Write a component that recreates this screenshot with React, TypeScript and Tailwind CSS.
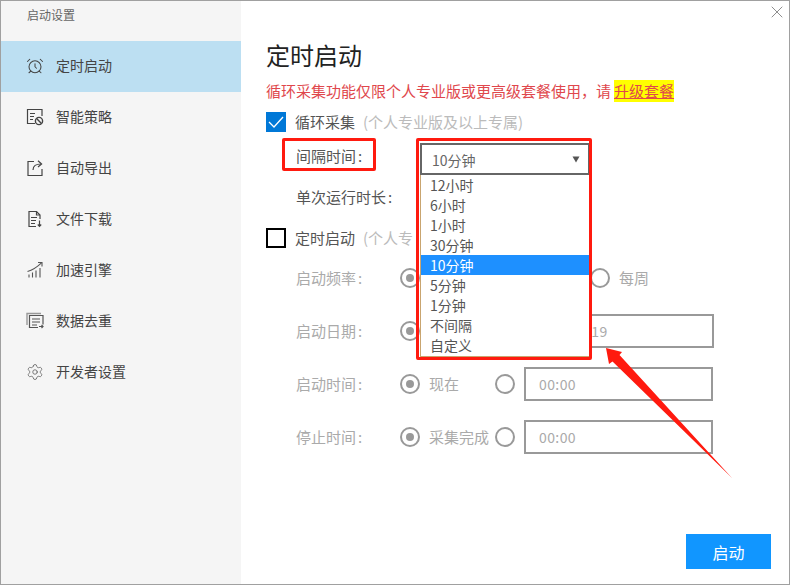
import React from 'react';
import { AlarmClock, Settings, X } from 'lucide-react';

const FONT = '[font-family:"Noto_Sans_CJK_SC","Noto_Sans",sans-serif]';

const StrategyIcon = () => (
  <svg width="18" height="18" viewBox="0 0 18 18" fill="none" stroke="#444" strokeWidth="1.2">
    <path d="M9 15.5H1.5V1.5H16V8" />
    <path d="M4 5.5h5M4 8.5h4M4 11.5h3" />
    <circle cx="13" cy="13" r="3.6" strokeWidth="1.4" />
    <path d="M10.6 10.6l4.8 4.8" strokeWidth="1.4" />
  </svg>
);

const ExportIcon = () => (
  <svg width="18" height="18" viewBox="0 0 18 18" fill="none" stroke="#444" strokeWidth="1.2">
    <path d="M8 2.5H2v14h14V10" />
    <path d="M7 11c0-4 3-6 8-6" />
    <path d="M12 1.8L15.6 5 12 8" />
  </svg>
);

const DownloadDocIcon = () => (
  <svg width="18" height="18" viewBox="0 0 18 18" fill="none" stroke="#444" strokeWidth="1.2">
    <path d="M10 16.5H3V1.5h7.5L14 5v4" />
    <path d="M10.5 1.5V5H14" />
    <path d="M5 7.5h6M5 10.5h5M5 13.5h4" />
    <path d="M13.5 10.5v5.5M11.8 14.5l1.7 1.8 1.7-1.8" />
  </svg>
);

const SpeedIcon = () => (
  <svg width="18" height="18" viewBox="0 0 18 18" fill="none" stroke="#555" strokeWidth="1.1">
    <path d="M1.5 10.5C5 9.5 10 7 15.5 1.8" />
    <path d="M12 1.5h4v4" />
    <path d="M3 16.5v-3M6.5 16.5v-5M10 16.5v-7M14 16.5V7" />
  </svg>
);

const DedupeIcon = () => (
  <svg width="18" height="18" viewBox="0 0 18 18" fill="none" stroke="#555" strokeWidth="1.2">
    <path d="M1 13V1.5h14" stroke="#999" strokeWidth="1.4" />
    <path d="M12 15.5H3.5v-12H17v9" />
    <path d="M6 7h8M6 10h8M6 13h5" />
    <path d="M13 14.5h4M15.5 13l1.5 1.5-1.5 1.5" />
  </svg>
);

const menu = [
  { label: '定时启动', icon: <AlarmClock size={18} strokeWidth={1.4} color="#444" />, active: true },
  { label: '智能策略', icon: <StrategyIcon /> },
  { label: '自动导出', icon: <ExportIcon /> },
  { label: '文件下载', icon: <DownloadDocIcon /> },
  { label: '加速引擎', icon: <SpeedIcon /> },
  { label: '数据去重', icon: <DedupeIcon /> },
  { label: '开发者设置', icon: <Settings size={18} strokeWidth={1} color="#555" /> },
];

const options = ['12小时', '6小时', '1小时', '30分钟', '10分钟', '5分钟', '1分钟', '不间隔', '自定义'];

const Radio = ({ on }: { on?: boolean }) => (
  <span className="flex h-5 w-5 shrink-0 items-center justify-center rounded-full border-2 border-[#999]">
    {on && <span className="h-2 w-2 rounded-full bg-[#999]" />}
  </span>
);

const TimeInput = ({ value }: { value: string }) => (
  <div className="flex h-[34px] w-[189px] items-center border-2 border-[#999] pl-[13px] text-[14px] tracking-[0.4px] text-[#aaa]">
    {value}
  </div>
);

const Label = ({ text, className }: { text: string; className?: string }) => (
  <span className={`shrink-0 ${className ?? ''}`}>
    {text}
    <span className="ml-[2px]">:</span>
  </span>
);

const App: React.FC = () => {
  return (
    <div className={`relative flex h-[585px] w-[790px] overflow-hidden border border-[#a0a0a0] bg-white ${FONT}`}>
      {/* Sidebar */}
      <aside className="w-[240px] shrink-0 bg-[#f5f5f5]">
        <div className="h-[40px] pl-[26px] pt-[5px] text-[12px] leading-[18px] text-[#666]">启动设置</div>
        {menu.map(item => (
          <div
            key={item.label}
            className={`flex h-[51px] items-center pb-[2px] pl-[25px] text-[14px] text-[#444] ${item.active ? 'bg-[#bcdff2]' : ''}`}
          >
            <span className="flex w-[30px] shrink-0">{item.icon}</span>
            {item.label}
          </div>
        ))}
      </aside>

      {/* Main */}
      <main className="flex min-w-0 flex-1 flex-col pl-[25px] pt-[38px]">
        <h1 className="text-[24px] leading-[32px] font-normal text-[#222]">定时启动</h1>
        <p className="mt-[10px] flex h-5 items-center text-[15px] whitespace-nowrap text-[#e0474c]">
          循环采集功能仅限个人专业版或更高级套餐使用，请
          <span className="ml-[3px] bg-[#ffff00] text-[#e0474c] underline">升级套餐</span>
        </p>

        <div className="mt-[11px] flex h-5 items-center text-[15px] whitespace-nowrap">
          <span className="flex h-5 w-5 items-center justify-center bg-[#0078d7]">
            <svg width="16" height="12" viewBox="0 0 16 12" fill="none" stroke="#fff" strokeWidth="1.3">
              <path d="M1 6l5 5L15 1" />
            </svg>
          </span>
          <span className="ml-[9px] text-[#555]">循环采集</span>
          <span className="ml-2 text-[#bbb]">(个人专业版及以上专属)</span>
        </div>

        <div className="relative mt-[11px] flex h-[32px] items-center pl-[30px] text-[15px] text-[#555]">
          <Label text="间隔时间" className="w-[124px] pb-[5px]" />
          <div className="relative w-[170px]">
            <div className="flex h-[32px] items-center justify-between border-2 border-[#666] bg-white pl-[10px] pr-[8px] text-[14px] text-[#666]">
              <span className="pt-[3px]">10分钟</span>
              <svg width="8" height="8" viewBox="0 0 8 8" fill="#555">
                <path d="M0.5 1.5h7L4 7.5z" />
              </svg>
            </div>
            {/* Open option list */}
            <ul className="absolute left-0 top-[32px] z-10 w-[170px] border border-t-0 border-[#c9a56f] bg-white pb-px text-[14px] leading-[20px] text-[#555]">
              {options.map(opt => (
                <li key={opt} className={`h-5 pl-[9px] ${opt === '10分钟' ? 'bg-[#1e90ff] text-white' : ''}`}>
                  {opt}
                </li>
              ))}
            </ul>
          </div>
        </div>

        <div className="mt-[12px] flex h-5 items-center pl-[30px] text-[15px] text-[#555]">
          <Label text="单次运行时长" />
        </div>

        <div className="mt-[21px] flex h-5 items-center text-[15px] whitespace-nowrap">
          <span className="h-5 w-5 border-2 border-black" />
          <span className="ml-[9px] text-[#555]">定时启动</span>
          <span className="ml-2 text-[#bbb]">(个人专</span>
        </div>

        <div className="mt-[13px] flex h-[34px] items-center pl-[30px] text-[15px] text-[#aaa]">
          <Label text="启动频率" className="w-[104px]" />
          <Radio on />
          <span className="ml-[170px]"><Radio /></span>
          <span className="ml-[9px]">每周</span>
        </div>

        <div className="mt-[19px] flex h-[34px] items-center pl-[30px] text-[15px] text-[#aaa]">
          <Label text="启动日期" className="w-[104px]" />
          <Radio on />
          <span className="ml-[76px]"><Radio /></span>
          <span className="ml-[9px]"><TimeInput value="2021-8-19" /></span>
        </div>

        <div className="mt-[19px] flex h-[34px] items-center pl-[30px] text-[15px] text-[#aaa]">
          <Label text="启动时间" className="w-[104px]" />
          <Radio on />
          <span className="ml-[9px] w-[66px]">现在</span>
          <Radio />
          <span className="ml-[9px]"><TimeInput value="00:00" /></span>
        </div>

        <div className="mt-[19px] flex h-[34px] items-center pl-[30px] text-[15px] text-[#aaa]">
          <Label text="停止时间" className="w-[104px]" />
          <Radio on />
          <span className="ml-[9px] w-[66px]">采集完成</span>
          <Radio />
          <span className="ml-[9px]"><TimeInput value="00:00" /></span>
        </div>

        <button className="mb-[15px] mr-[18px] mt-auto flex h-[35px] w-[85px] items-center justify-center self-end bg-[#1196ff] text-[16px] text-white">
          启动
        </button>
      </main>

      <X size={20} strokeWidth={1} color="#777" className="absolute right-[2px] top-px" />

      {/* Red annotations drawn on top of the screenshot */}
      <div className="absolute left-[281px] top-[137px] z-20 h-[33px] w-[94px] rounded-[2px] border-[3px] border-[#ff1a0f]" />
      <div className="absolute left-[415px] top-[137px] z-20 h-[222px] w-[176px] rounded-[2px] border-[3px] border-[#ff1a0f]" />
      <svg className="absolute left-[-1px] top-[-1px] z-20" width="790" height="585" viewBox="0 0 790 585" fill="#ff1a0f">
        <path d="M606 348L622 352 619.5 355 732 478 612.5 361.5 609 364z" />
      </svg>
    </div>
  );
};

export default App;
